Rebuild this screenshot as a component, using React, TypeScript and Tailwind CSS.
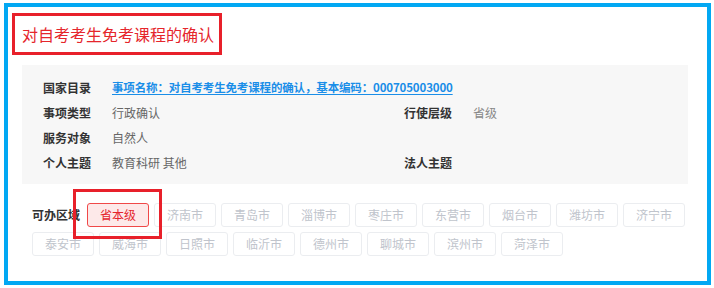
import React from "react";

const font = { fontFamily: '"Noto Sans CJK SC", "Noto Sans", sans-serif' };

const cities = [
  "济南市",
  "青岛市",
  "淄博市",
  "枣庄市",
  "东营市",
  "烟台市",
  "潍坊市",
  "济宁市",
  "泰安市",
  "威海市",
  "日照市",
  "临沂市",
  "德州市",
  "聊城市",
  "滨州市",
  "菏泽市",
];

const Label = ({ children }: { children: React.ReactNode }) => (
  <span className="w-[69px] shrink-0 font-bold text-[#333]">{children}</span>
);

const App = () => {
  return (
    <div
      className="relative h-[288px] w-[714px] overflow-hidden bg-white pl-[4px] pt-[3px]"
      style={font}
    >
      <div className="h-[282px] w-[707px] border-4 border-[#02a8f3] bg-white px-[4px] pt-[6px]">
        {/* title */}
        <div className="flex h-[42px] w-[210px] items-center border-[3px] border-[#e8202a] pl-[7px] text-[16px] text-[#e5262c]">
          对自考考生免考课程的确认
        </div>

        {/* info panel */}
        <div className="ml-[10px] mt-[10px] w-[666px] bg-[#f7f7f7] pb-[9px] pl-[21px] pt-[10px] text-[12px] leading-[25px]">
          <div className="flex">
            <Label>国家目录</Label>
            <a className="text-[11.5px] font-bold tracking-[-0.15px] text-[#1a8ee8] underline underline-offset-2">
              事项名称：对自考考生免考课程的确认，基本编码：000705003000
            </a>
          </div>
          <div className="grid grid-cols-[361px_1fr]">
            <div className="flex">
              <Label>事项类型</Label>
              <span className="text-[#666]">行政确认</span>
            </div>
            <div className="flex">
              <Label>行使层级</Label>
              <span className="text-[#888]">省级</span>
            </div>
            <div className="flex">
              <Label>服务对象</Label>
              <span className="text-[#666]">自然人</span>
            </div>
            <div />
            <div className="flex">
              <Label>个人主题</Label>
              <span className="text-[#666]">教育科研 其他</span>
            </div>
            <div className="flex">
              <Label>法人主题</Label>
            </div>
          </div>
        </div>

        {/* regions */}
        <div className="ml-[20px] mt-[19px] flex w-[660px] flex-wrap items-center gap-x-[5px] gap-y-[5px] text-[12px]">
          <span className="w-[50px] font-bold text-[#333]">可办区域</span>
          <span className="flex h-[24px] w-[62px] items-center justify-center rounded-[3px] border border-[#f04848] bg-[#fde9e9] text-[#e5262c]">
            省本级
          </span>
          {cities.map((c) => (
            <span
              key={c}
              className="flex h-[24px] w-[62px] items-center justify-center rounded-[3px] border border-[#ebedf0] bg-white text-[#c0c4cc]"
            >
              {c}
            </span>
          ))}
        </div>
      </div>

      {/* annotation box over 省本级 */}
      <div className="absolute left-[73px] top-[189px] h-[50px] w-[89px] border-[3px] border-[#e8202a]" />
    </div>
  );
};

export default App;
